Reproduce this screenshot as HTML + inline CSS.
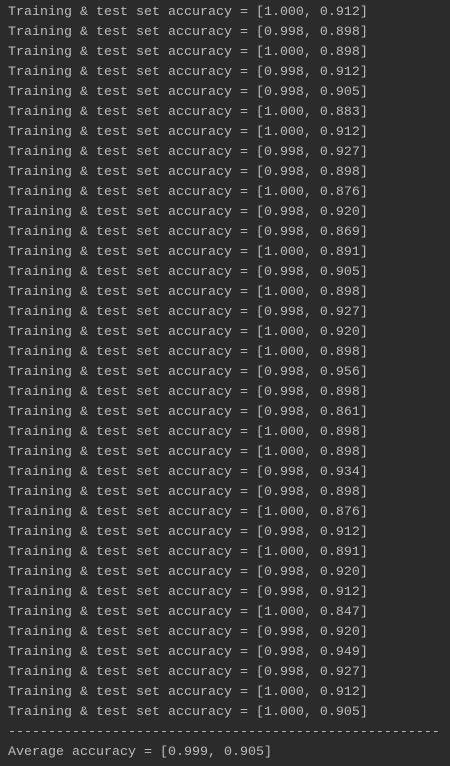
<!DOCTYPE html>
<html><head><style>
html,body{margin:0;padding:0;background:#2b2b2b;width:450px;height:766px;overflow:hidden}
pre{margin:0;padding:3px 0 0 8px;font-family:"Liberation Mono",monospace;font-size:13.33px;line-height:20px;color:#bbbbbb}
</style></head><body><pre>Training &amp; test set accuracy = [1.000, 0.912]
Training &amp; test set accuracy = [0.998, 0.898]
Training &amp; test set accuracy = [1.000, 0.898]
Training &amp; test set accuracy = [0.998, 0.912]
Training &amp; test set accuracy = [0.998, 0.905]
Training &amp; test set accuracy = [1.000, 0.883]
Training &amp; test set accuracy = [1.000, 0.912]
Training &amp; test set accuracy = [0.998, 0.927]
Training &amp; test set accuracy = [0.998, 0.898]
Training &amp; test set accuracy = [1.000, 0.876]
Training &amp; test set accuracy = [0.998, 0.920]
Training &amp; test set accuracy = [0.998, 0.869]
Training &amp; test set accuracy = [1.000, 0.891]
Training &amp; test set accuracy = [0.998, 0.905]
Training &amp; test set accuracy = [1.000, 0.898]
Training &amp; test set accuracy = [0.998, 0.927]
Training &amp; test set accuracy = [1.000, 0.920]
Training &amp; test set accuracy = [1.000, 0.898]
Training &amp; test set accuracy = [0.998, 0.956]
Training &amp; test set accuracy = [0.998, 0.898]
Training &amp; test set accuracy = [0.998, 0.861]
Training &amp; test set accuracy = [1.000, 0.898]
Training &amp; test set accuracy = [1.000, 0.898]
Training &amp; test set accuracy = [0.998, 0.934]
Training &amp; test set accuracy = [0.998, 0.898]
Training &amp; test set accuracy = [1.000, 0.876]
Training &amp; test set accuracy = [0.998, 0.912]
Training &amp; test set accuracy = [1.000, 0.891]
Training &amp; test set accuracy = [0.998, 0.920]
Training &amp; test set accuracy = [0.998, 0.912]
Training &amp; test set accuracy = [1.000, 0.847]
Training &amp; test set accuracy = [0.998, 0.920]
Training &amp; test set accuracy = [0.998, 0.949]
Training &amp; test set accuracy = [0.998, 0.927]
Training &amp; test set accuracy = [1.000, 0.912]
Training &amp; test set accuracy = [1.000, 0.905]
------------------------------------------------------
Average accuracy = [0.999, 0.905]</pre></body></html>
